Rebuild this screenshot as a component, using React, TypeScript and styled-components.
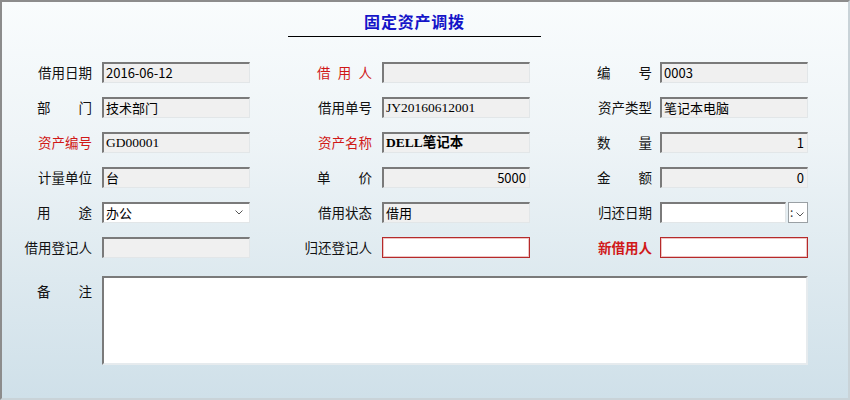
import styled, { createGlobalStyle } from 'styled-components';

const GlobalStyle = createGlobalStyle`
  html, body {
    margin: 0;
    padding: 0;
    background: #ffffff;
  }
  body {
    font-family: "Noto Sans CJK SC", "Liberation Sans", sans-serif;
  }
`;

type Tone = 'normal' | 'red' | 'strong';

type FieldDef = {
  label: string;
  tone?: Tone;
  spread?: boolean;
  kind?: 'readonly' | 'required' | 'select' | 'date';
  value?: string;
  align?: 'left' | 'right';
  font?: 'sans' | 'serif' | 'bold';
};

const rows: FieldDef[][] = [
  [
    { label: '借用日期', value: '2016-06-12' },
    { label: '借用人', tone: 'red', spread: true },
    { label: '编号', spread: true, value: '0003' },
  ],
  [
    { label: '部门', spread: true, value: '技术部门' },
    { label: '借用单号', value: 'JY20160612001', font: 'serif' },
    { label: '资产类型', value: '笔记本电脑' },
  ],
  [
    { label: '资产编号', tone: 'red', value: 'GD00001', font: 'serif' },
    { label: '资产名称', tone: 'red', value: 'DELL笔记本', font: 'bold' },
    { label: '数量', spread: true, value: '1', align: 'right' },
  ],
  [
    { label: '计量单位', value: '台' },
    { label: '单价', spread: true, value: '5000', align: 'right' },
    { label: '金额', spread: true, value: '0', align: 'right' },
  ],
  [
    { label: '用途', spread: true, kind: 'select', value: '办公' },
    { label: '借用状态', value: '借用' },
    { label: '归还日期', kind: 'date' },
  ],
  [
    { label: '借用登记人' },
    { label: '归还登记人', kind: 'required' },
    { label: '新借用人', tone: 'strong', kind: 'required' },
  ],
];

const Window = styled.div`
  box-sizing: border-box;
  width: 850px;
  height: 400px;
  border-top: 2px solid #8c8c8c;
  border-left: 2px solid #8c8c8c;
  border-right: 2px solid #c9d3d8;
  border-bottom: 2px solid #c9d3d8;
  background: linear-gradient(to bottom, #f9fcfd 0%, #eef4f7 35%, #dde9ef 70%, #cfe0e9 100%);
  display: flex;
  flex-direction: column;
`;

const Header = styled.div`
  margin-left: 286px;
  width: 253px;
  padding-top: 9px;
  height: 25px;
  border-bottom: 1px solid #000;
  text-align: center;
`;

const Title = styled.h1`
  margin: 0;
  font-size: 16px;
  line-height: 20px;
  font-weight: 700;
  color: #1414c8;
  letter-spacing: 0.8px;
`;

const Form = styled.div`
  display: flex;
  flex-direction: column;
  row-gap: 15px;
  margin-top: 25px;
  padding-left: 10px;
`;

const Row = styled.div`
  display: flex;
  column-gap: 42px;
  height: 20px;
`;

const Field = styled.div<{ $gap: number }>`
  display: flex;
  align-items: center;
  column-gap: ${({ $gap }) => $gap}px;
`;

const Label = styled.span<{ $tone: Tone }>`
  width: 80px;
  flex-shrink: 0;
  text-align: right;
  font-size: 13.5px;
  line-height: 20px;
  white-space: nowrap;
  color: ${({ $tone }) => ($tone === 'normal' ? '#111' : '#d01818')};
  font-weight: ${({ $tone }) => ($tone === 'strong' ? 700 : 400)};
`;

const Spread = styled.span`
  display: inline-block;
  width: 55px;
  text-align: justify;
  text-align-last: justify;
`;

const fontFor = (font?: FieldDef['font']) => {
  if (font === 'serif') return `"Liberation Serif", serif; font-size: 13.5px;`;
  if (font === 'bold') return `"Liberation Serif", "Noto Sans CJK SC", serif; font-weight: 700; font-size: 13.5px;`;
  return `"Noto Sans CJK SC", "Liberation Sans", sans-serif; font-size: 13px;`;
};

const Box = styled.div<{ $align?: 'left' | 'right'; $font?: FieldDef['font'] }>`
  box-sizing: border-box;
  width: 148px;
  height: 21px;
  padding: 0 3px 0 2px;
  background: #f0f0f0;
  border-top: 2px solid #7a7a7a;
  border-left: 2px solid #7a7a7a;
  border-right: 1px solid #e2e6e8;
  border-bottom: 1px solid #e2e6e8;
  color: #000;
  line-height: 18px;
  white-space: nowrap;
  overflow: hidden;
  text-align: ${({ $align }) => $align || 'left'};
  font-family: ${({ $font }) => fontFor($font)};
`;

const RequiredBox = styled.div`
  box-sizing: border-box;
  width: 148px;
  height: 21px;
  background: #fff;
  border: 1px solid #b52a2a;
  box-shadow: inset 0 0 0 1px #efc4c4;
`;

const SelectBox = styled(Box)`
  background: #fff;
  display: flex;
  align-items: center;
  justify-content: space-between;
  padding-right: 6px;
`;

const DateWrap = styled.div`
  display: flex;
  align-items: center;
  column-gap: 2px;
`;

const DateInput = styled(Box)`
  width: 126px;
  background: #fff;
`;

const DateButton = styled.div`
  box-sizing: border-box;
  width: 20px;
  height: 21px;
  background: #fff;
  border: 1px solid #9aa0a4;
  display: flex;
  align-items: center;
  padding-left: 1px;
  font-size: 12px;
  color: #333;
  line-height: 1;
`;

const RemarkRow = styled.div`
  display: flex;
  column-gap: 10px;
  margin-top: 19px;
  padding-left: 10px;
`;

const RemarkLabel = styled(Label)`
  align-self: flex-start;
  padding-top: 5px;
`;

const RemarkArea = styled.div`
  box-sizing: border-box;
  width: 706px;
  height: 89px;
  background: #fff;
  border-top: 2px solid #7a7a7a;
  border-left: 2px solid #7a7a7a;
  border-right: 2px solid #e6ebee;
  border-bottom: 2px solid #e6ebee;
`;

const Chevron = () => (
  <svg width="8" height="5" viewBox="0 0 8 5">
    <path d="M0.5 0.5 L4 4 L7.5 0.5" fill="none" stroke="#555" strokeWidth="1" />
  </svg>
);

function Control({ field }: { field: FieldDef }) {
  if (field.kind === 'required') return <RequiredBox />;
  if (field.kind === 'select') {
    return (
      <SelectBox>
        <span>{field.value}</span>
        <Chevron />
      </SelectBox>
    );
  }
  if (field.kind === 'date') {
    return (
      <DateWrap>
        <DateInput />
        <DateButton>
          <span>:</span>
          <span style={{ marginLeft: 3 }}>
            <Chevron />
          </span>
        </DateButton>
      </DateWrap>
    );
  }
  return (
    <Box $align={field.align} $font={field.font}>
      {field.value}
    </Box>
  );
}

export default function App() {
  return (
    <>
      <GlobalStyle />
      <Window>
        <Header>
          <Title>固定资产调拨</Title>
        </Header>

        <Form>
          {rows.map((row, r) => (
            <Row key={r}>
              {row.map((field, c) => (
                <Field key={field.label} $gap={c === 2 ? 8 : 10}>
                  <Label $tone={field.tone || 'normal'}>
                    {field.spread ? <Spread>{field.label}</Spread> : field.label}
                  </Label>
                  <Control field={field} />
                </Field>
              ))}
            </Row>
          ))}
        </Form>

        <RemarkRow>
          <RemarkLabel $tone='normal'>
            <Spread>备注</Spread>
          </RemarkLabel>
          <RemarkArea />
        </RemarkRow>
      </Window>
    </>
  );
}
